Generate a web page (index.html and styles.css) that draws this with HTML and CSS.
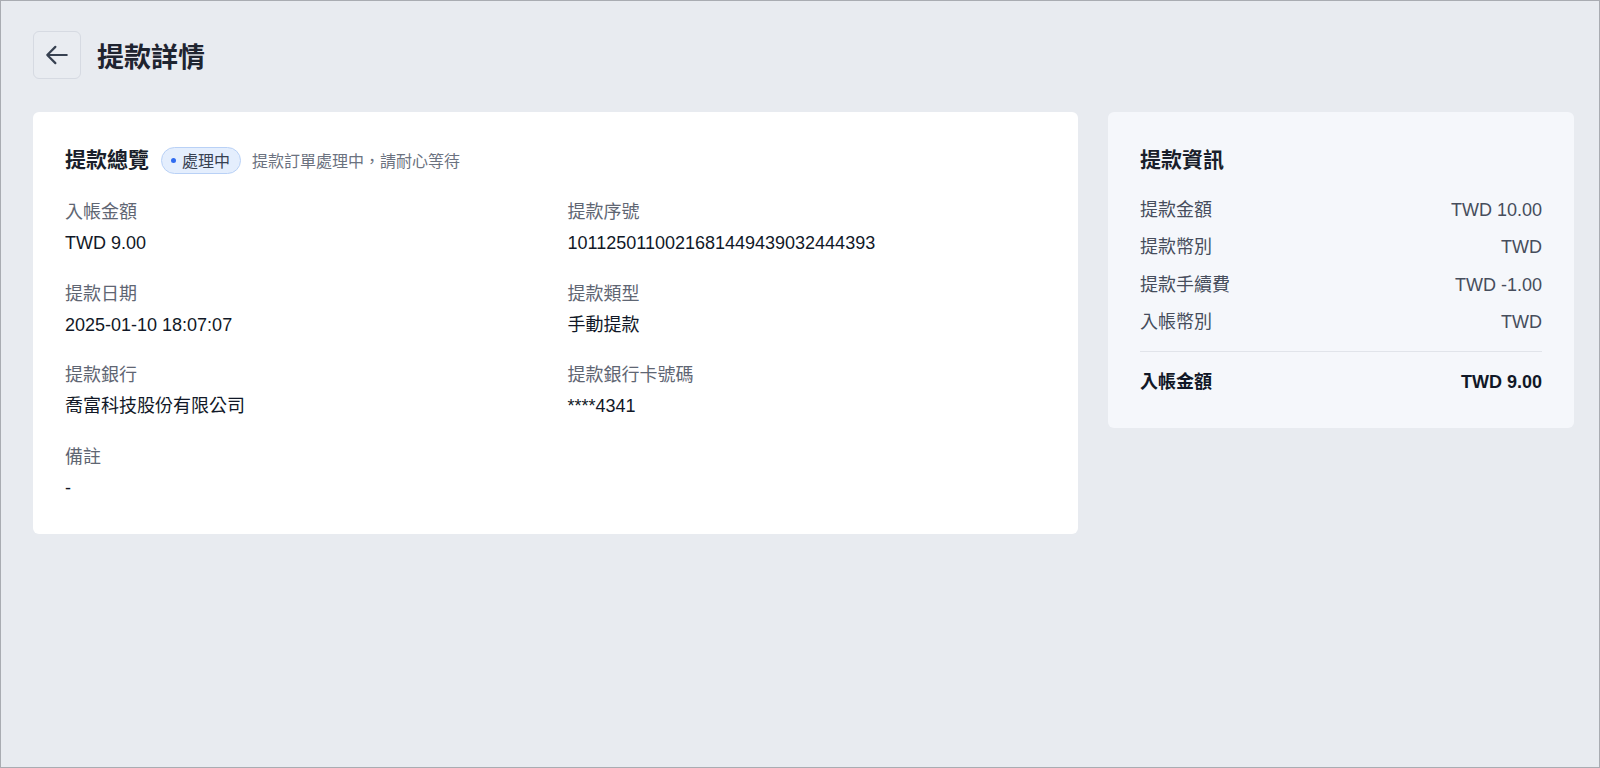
FILE: index.html
```html
<!DOCTYPE html>
<html lang="zh-TW">
<head>
    <meta charset="UTF-8">
    <title>提款詳情</title>
    <link rel="stylesheet" href="styles.css">
</head>
<body>
    <div class="page">
        <div class="page-header">
            <button type="button" class="btn-back" aria-label="返回">
                <svg width="26" height="26" viewBox="0 0 24 24" fill="none" stroke="currentColor" stroke-width="2" stroke-linecap="round" stroke-linejoin="round">
                    <path d="M10.5 19.5 3 12l7.5-7.5M3 12h18"/>
                </svg>
            </button>
            <h1>提款詳情</h1>
        </div>

        <div class="layout">
            <section class="card">
                <div class="card-title">
                    <h2>提款總覽</h2>
                    <span class="badge"><span class="dot"></span>處理中</span>
                    <span class="hint">提款訂單處理中，請耐心等待</span>
                </div>

                <div class="fields">
                    <div class="field">
                        <div class="label">入帳金額</div>
                        <div class="value">TWD 9.00</div>
                    </div>
                    <div class="field">
                        <div class="label">提款序號</div>
                        <div class="value">1011250110021681449439032444393</div>
                    </div>
                    <div class="field">
                        <div class="label">提款日期</div>
                        <div class="value">2025-01-10 18:07:07</div>
                    </div>
                    <div class="field">
                        <div class="label">提款類型</div>
                        <div class="value">手動提款</div>
                    </div>
                    <div class="field">
                        <div class="label">提款銀行</div>
                        <div class="value">喬富科技股份有限公司</div>
                    </div>
                    <div class="field">
                        <div class="label">提款銀行卡號碼</div>
                        <div class="value">****4341</div>
                    </div>
                    <div class="field">
                        <div class="label">備註</div>
                        <div class="value">-</div>
                    </div>
                </div>
            </section>

            <aside class="card card-summary">
                <h2>提款資訊</h2>
                <div class="rows">
                    <div class="row"><span>提款金額</span><span>TWD 10.00</span></div>
                    <div class="row"><span>提款幣別</span><span>TWD</span></div>
                    <div class="row"><span>提款手續費</span><span>TWD -1.00</span></div>
                    <div class="row"><span>入帳幣別</span><span>TWD</span></div>
                </div>
                <div class="row total"><span>入帳金額</span><span>TWD 9.00</span></div>
            </aside>
        </div>
    </div>
</body>
</html>
```

FILE: styles.css
```css
* {
    box-sizing: border-box;
}
body {
    margin: 0;
    height: 768px;
    overflow: hidden;
    font-family: "Liberation Sans", "Noto Sans CJK TC", sans-serif;
    font-size: 18px;
    color: #111827;
    background-color: #e8ebf0;
    border: 1px solid #a9acb2;
}
.page {
    padding: 30px 25px 0 32px;
}
.page-header {
    display: flex;
    align-items: center;
    gap: 16px;
    margin-bottom: 33px;
}
.btn-back {
    width: 48px;
    height: 48px;
    display: flex;
    align-items: center;
    justify-content: center;
    padding: 0;
    background: #e9ecf1;
    border: 1px solid #d6dae2;
    border-radius: 6px;
    color: #374151;
}
h1 {
    margin: 0;
    font-size: 27px;
    font-weight: bold;
    color: #1f2430;
}
.layout {
    display: grid;
    grid-template-columns: 1fr 466px;
    gap: 30px;
    align-items: start;
}
.card {
    background: #fff;
    border-radius: 6px;
    padding: 32px;
}
.card-title {
    display: flex;
    align-items: center;
    height: 32px;
}
h2 {
    margin: 0;
    font-size: 21px;
    font-weight: bold;
    color: #1a1f2b;
    line-height: 32px;
}
.badge {
    display: flex;
    align-items: center;
    gap: 6px;
    height: 27px;
    margin-left: 12px;
    padding: 0 10px 0 9px;
    font-size: 16px;
    color: #374151;
    background: #e4eefd;
    border: 1px solid #b9d1f6;
    border-radius: 14px;
}
.dot {
    width: 5px;
    height: 5px;
    border-radius: 50%;
    background: #2f6bf0;
}
.hint {
    margin-left: 11px;
    font-size: 16px;
    color: #6b7280;
}
.fields {
    display: grid;
    grid-template-columns: 1fr 1fr;
    column-gap: 24px;
    row-gap: 22.5px;
    margin-top: 22px;
}
.label {
    line-height: 28px;
    color: #5f6673;
}
.value {
    margin-top: 3px;
    line-height: 28px;
    color: #111827;
}
.card-summary {
    background: #f5f7fb;
}
.rows {
    display: flex;
    flex-direction: column;
    gap: 9.5px;
    margin-top: 19.5px;
    padding-bottom: 15px;
    border-bottom: 1px solid #e1e4ea;
}
.row {
    display: flex;
    justify-content: space-between;
    line-height: 28px;
    color: #464d5c;
}
.row.total {
    margin-top: 16px;
    font-weight: bold;
    color: #111827;
}
```
